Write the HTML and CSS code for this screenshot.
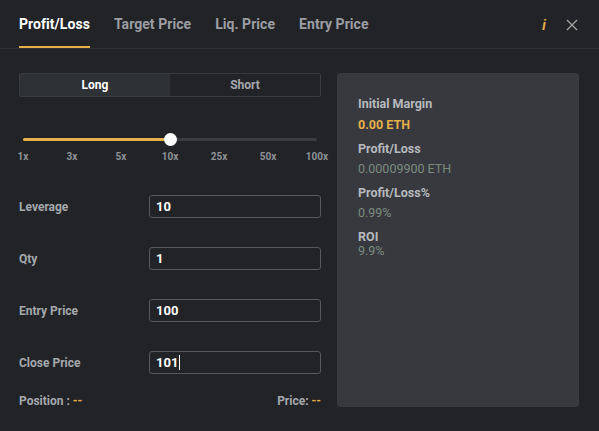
FILE: index.html
```html
<!DOCTYPE html>
<html>
<head>
<meta charset="utf-8">
<link rel="stylesheet" href="styles.css">
</head>
<body>
<div class="modal">
  <div class="header">
    <div class="tab active">Profit/Loss</div>
    <div class="tab">Target Price</div>
    <div class="tab">Liq. Price</div>
    <div class="tab">Entry Price</div>
    <div class="spacer"></div>
    <div class="info">i</div>
    <svg class="close" width="12" height="12" viewBox="0 0 12 12"><path d="M1 1L11 11M11 1L1 11" stroke="#a3a8a5" stroke-width="1.3" fill="none"/></svg>
  </div>
  <div class="main">
    <div class="left">
      <div class="toggle">
        <div class="opt on">Long</div>
        <div class="opt">Short</div>
      </div>
      <div class="slider">
        <div class="track">
          <div class="fill" style="width:50%"></div>
          <div class="thumb"></div>
        </div>
      </div>
      <div class="ticks">
        <span class="tick"><span>1x</span></span>
        <span class="tick"><span>3x</span></span>
        <span class="tick"><span>5x</span></span>
        <span class="tick"><span>10x</span></span>
        <span class="tick"><span>25x</span></span>
        <span class="tick"><span>50x</span></span>
        <span class="tick"><span>100x</span></span>
      </div>
      <div class="form">
        <div class="row"><div class="label">Leverage</div><div class="input">10</div></div>
        <div class="row"><div class="label">Qty</div><div class="input">1</div></div>
        <div class="row"><div class="label">Entry Price</div><div class="input">100</div></div>
        <div class="row"><div class="label">Close Price</div><div class="input">101<span class="caret"></span></div></div>
      </div>
      <div class="footer">
        <div>Position : <span class="dash">--</span></div>
        <div>Price: <span class="dash">--</span></div>
      </div>
    </div>
    <div class="card">
      <div class="k">Initial Margin</div>
      <div class="v yellow">0.00 ETH</div>
      <div class="k">Profit/Loss</div>
      <div class="v">0.00009900 ETH</div>
      <div class="k">Profit/Loss%</div>
      <div class="v">0.99%</div>
      <div class="k">ROI</div>
      <div class="v roi">9.9%</div>
    </div>
  </div>
</div>
</body>
</html>
```
FILE: styles.css
```css
html, body {
  margin: 0;
  padding: 0;
  background: #222327;
}
body {
  width: 599px;
  height: 431px;
  overflow: hidden;
  font-family: Roboto, "Liberation Sans", sans-serif;
}
.modal {
  width: 599px;
  height: 431px;
}
.header {
  display: flex;
  align-items: stretch;
  padding: 0 21px 0 19px;
  box-sizing: border-box;
  height: 49px;
  border-bottom: 1px solid #303236;
}
.tab {
  font-size: 14px;
  font-weight: 700;
  color: #9c9ea3;
  margin-right: 24px;
  padding-top: 16px;
  box-sizing: border-box;
  border-bottom: 2px solid transparent;
  line-height: 17px;
  letter-spacing: 0.05px;
}
.tab.active {
  color: #ffffff;
  border-bottom-color: #e6b04a;
}
.spacer { flex: 1; }
.info {
  color: #e6b04a;
  font-style: italic;
  font-weight: 700;
  font-family: "Liberation Sans", sans-serif;
  font-size: 14px;
  padding-top: 17px;
  margin-right: 20px;
}
.close {
  margin-top: 19px;
}
.main {
  display: flex;
  padding: 24px 20px 0 19px;
  gap: 16px;
}
.left {
  width: 302px;
}
.toggle {
  height: 24px;
  border: 1px solid #393b40;
  border-radius: 2px;
  display: flex;
  box-sizing: border-box;
}
.opt {
  flex: 1;
  display: flex;
  align-items: center;
  justify-content: center;
  font-size: 12px;
  font-weight: 700;
  color: #a5a8ad;
}
.opt.on {
  background: #2e3135;
  color: #ffffff;
}
.slider {
  margin-top: 32px;
  height: 20px;
  padding: 0 4px;
  display: flex;
  align-items: center;
}
.track {
  position: relative;
  flex: 1;
  height: 3px;
  background: #3a3c41;
  border-radius: 2px;
}
.fill {
  height: 3px;
  background: #e6b04a;
  border-radius: 2px;
}
.thumb {
  position: absolute;
  left: 50%;
  top: -5px;
  width: 13px;
  height: 13px;
  margin-left: -6px;
  border-radius: 50%;
  background: #ffffff;
}
.ticks {
  display: flex;
  justify-content: space-between;
  padding: 0 4px;
  height: 14px;
  margin-top: 1px;
}
.tick {
  width: 0;
  display: flex;
  justify-content: center;
  white-space: nowrap;
  font-size: 10px;
  font-weight: 700;
  color: #8f9297;
  line-height: 14px;
}
.form {
  margin-top: 31px;
  display: flex;
  flex-direction: column;
  gap: 29px;
}
.row {
  display: flex;
  align-items: center;
  height: 23px;
}
.label {
  width: 130px;
  font-size: 12px;
  font-weight: 700;
  color: #a5a8ad;
}
.input {
  flex: 1;
  height: 23px;
  box-sizing: border-box;
  border: 1px solid #56585d;
  border-radius: 3px;
  padding-left: 6px;
  font-size: 13px;
  font-weight: 700;
  color: #ffffff;
  display: flex;
  align-items: center;
}
.caret {
  display: inline-block;
  width: 1px;
  height: 15px;
  background: #ffffff;
  margin-left: 1px;
}
.footer {
  margin-top: 20px;
  display: flex;
  justify-content: space-between;
  font-size: 12px;
  font-weight: 700;
  color: #a5a8ad;
  line-height: 14px;
}
.dash {
  color: #e6b04a;
}
.card {
  width: 242px;
  height: 334px;
  box-sizing: border-box;
  background: #37393e;
  border-radius: 3px;
  padding: 23px 21px;
}
.k {
  font-size: 12.5px;
  font-weight: 700;
  color: #b8babe;
  line-height: 16px;
  margin-top: 8px;
}
.k:first-child { margin-top: 0; }
.v {
  font-size: 12.5px;
  color: #7c8b7e;
  line-height: 16px;
  margin-top: 4px;
}
.v.yellow {
  color: #e6b04a;
  font-weight: 700;
  margin-top: 5px;
}
.v.roi { margin-top: -2px; }
```
